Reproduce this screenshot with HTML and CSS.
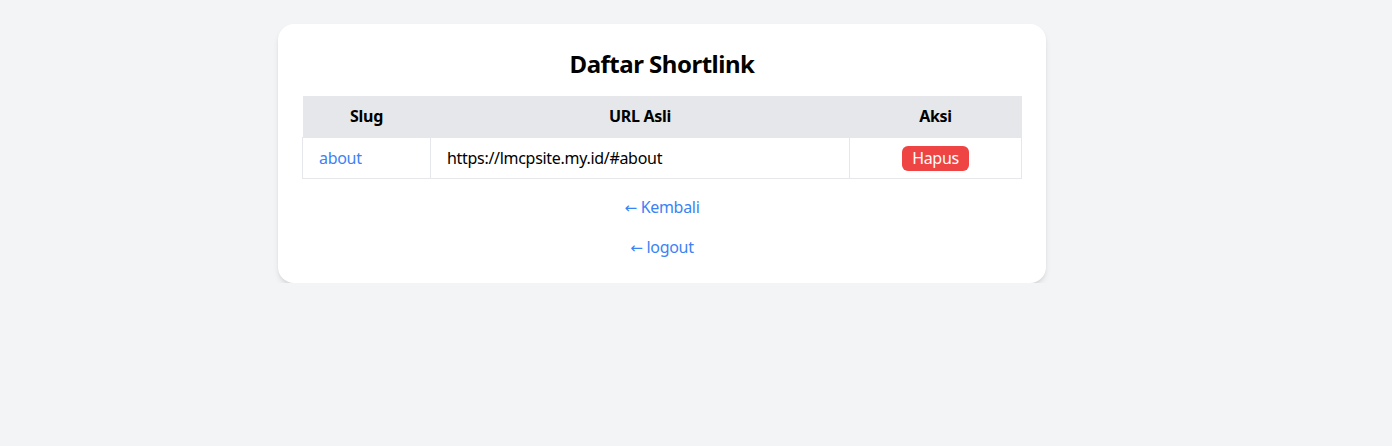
FILE: index.html
```html
<!DOCTYPE html>
<html lang="id">
<head>
<meta charset="utf-8">
<title>Daftar Shortlink</title>
<link rel="stylesheet" href="styles.css">
</head>
<body>
<main class="card">
  <h1 class="title">Daftar Shortlink</h1>
  <table class="links">
    <thead>
      <tr>
        <th class="col-slug">Slug</th>
        <th class="col-url">URL Asli</th>
        <th class="col-action">Aksi</th>
      </tr>
    </thead>
    <tbody>
      <tr>
        <td><a class="link" href="#">about</a></td>
        <td>https://lmcpsite.my.id/#about</td>
        <td class="center"><button class="btn-delete" type="button">Hapus</button></td>
      </tr>
    </tbody>
  </table>
  <div class="nav"><a class="link" href="#"><span class="arrow">←</span> Kembali</a></div>
  <div class="nav"><a class="link" href="#"><span class="arrow">←</span> logout</a></div>
</main>
</body>
</html>
```
FILE: styles.css
```css
* { box-sizing: border-box; }
html, body { margin: 0; }
body {
  background: #f3f4f6;
  font-family: "Noto Sans", "Open Sans", sans-serif;
  font-size: 16px;
  line-height: 24px;
  color: #000;
  padding: 24px 68px 0 0;
}
.card {
  width: 768px;
  margin: 0 auto;
  background: #fff;
  border-radius: 16px;
  padding: 24px;
  box-shadow: 0 4px 6px -1px rgba(0,0,0,0.1), 0 2px 4px -2px rgba(0,0,0,0.1);
}
.title {
  margin: 0 0 16px;
  font-size: 24px;
  line-height: 32px;
  font-weight: 700;
  text-align: center;
  letter-spacing: -0.5px;
}
.links {
  width: 100%;
  border-collapse: collapse;
}
.links th {
  background: #e5e7eb;
  font-weight: 700;
  padding: 0 16px;
  height: 41px;
  text-align: center;
  letter-spacing: -0.3px;
}
.links td {
  border: 1px solid #e5e7eb;
  padding: 0 16px;
  height: 41px;
  letter-spacing: -0.3px;
}
.col-slug { width: 128px; }
.col-action { width: 172px; }
.center { text-align: center; }
.link {
  color: #3b82f6;
  text-decoration: none;
}
.arrow {
  font-family: "DejaVu Sans", sans-serif;
  font-size: 15px;
  line-height: 1;
}
.btn-delete {
  font: inherit;
  letter-spacing: -0.3px;
  background: #ef4444;
  color: #fff;
  border: 0;
  border-radius: 6px;
  padding: 0 10px;
  height: 25px;
  line-height: 25px;
  vertical-align: middle;
  cursor: pointer;
}
.nav {
  margin-top: 16px;
  text-align: center;
  letter-spacing: -0.3px;
}
```
